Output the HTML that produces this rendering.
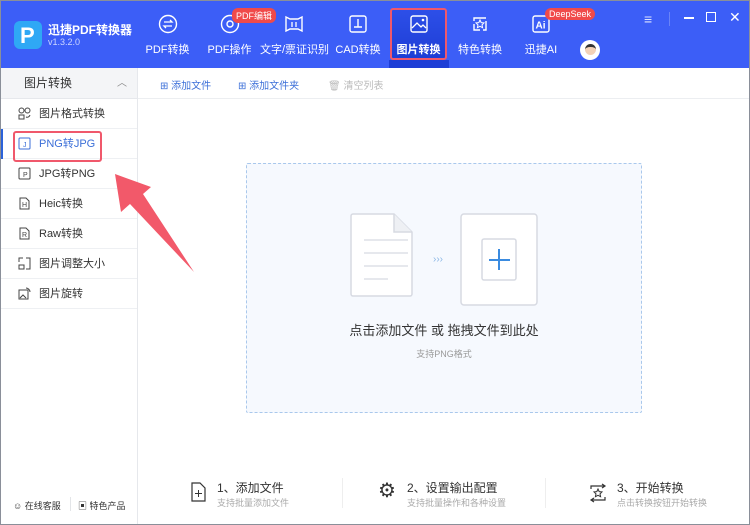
<!DOCTYPE html>
<html><head><meta charset="utf-8"><style>
*{margin:0;padding:0;box-sizing:border-box}
body{width:750px;height:525px;overflow:hidden;font-family:"Liberation Sans","Noto Sans CJK SC",sans-serif;background:#fff;position:relative;color:#333}
.abs{position:absolute}
.hdr{left:0;top:0;width:750px;height:68px;background:#3c5ef7}
.tab{position:absolute;top:0;height:68px;color:#fff;font-size:11px;text-align:center}
.tab span{position:absolute;top:41px;left:0;right:0;white-space:nowrap}
.tab svg{position:absolute;top:14px;left:50%;margin-left:-10px}
.side{left:0;top:68px;width:138px;height:457px;border-right:1px solid #e6e8ec;background:#fff}
.item{position:absolute;left:0;width:137px;height:30px;border-bottom:1px solid #eef0f3;font-size:11px;color:#333;padding-left:39px;line-height:30px}
.item svg{position:absolute;left:18px;top:8px}
.tb{font-size:10px;color:#3c6fd8;top:77px}
</style></head><body>
<div class="abs hdr"></div>
<div class="abs" style="left:14px;top:21px;width:28px;height:28px;border-radius:6px;background:#2fa8f5"></div>
<div class="abs" style="left:20px;top:25px;color:#fff;font-weight:bold;font-size:22px;line-height:22px">P</div>
<div class="abs" style="left:48px;top:21px;color:#fff;font-weight:bold;font-size:12px">迅捷PDF转换器</div>
<div class="abs" style="left:48px;top:37px;color:#cdd7ff;font-size:9px">v1.3.2.0</div>
<div class="tab" style="left:140px;width:55px"><svg width="20" height="20"><circle cx="10" cy="10" r="8.5" fill="none" stroke="#fff" stroke-width="1.4"/><path d="M6 8h8l-2-2M14 12H6l2 2" fill="none" stroke="#fff" stroke-width="1.3"/></svg><span>PDF转换</span></div>
<div class="tab" style="left:202px;width:55px"><svg width="20" height="20"><circle cx="10" cy="10" r="8.5" fill="none" stroke="#fff" stroke-width="1.4"/><circle cx="10" cy="10" r="3" fill="none" stroke="#fff" stroke-width="1.4"/></svg><span>PDF操作</span></div>
<div class="abs" style="left:232px;top:8px;background:#f04a4a;color:#fff;font-size:9px;padding:1px 4px;border-radius:6px">PDF编辑</div>
<div class="tab" style="left:260px;width:68px"><svg width="20" height="20"><path d="M2 3l4 2h8l4-2v14l-4-2H6l-4 2z" fill="none" stroke="#fff" stroke-width="1.4"/><path d="M8 8v5M12 8v5" stroke="#fff" stroke-width="1.3"/></svg><span>文字/票证识别</span></div>
<div class="tab" style="left:333px;width:50px"><svg width="20" height="20"><rect x="2" y="2" width="16" height="16" rx="2" fill="none" stroke="#fff" stroke-width="1.4"/><path d="M10 5v8M6 13h8" stroke="#fff" stroke-width="1.4"/></svg><span>CAD转换</span></div>
<div class="abs" style="left:390px;top:8px;width:57px;height:52px;border:2.5px solid #f0586b;border-radius:3px;background:linear-gradient(#2d4fe8,#1e3ed6)"></div>
<div class="abs" style="left:389px;top:60px;width:60px;height:8px;background:#1e3ed6"></div>
<div class="tab" style="left:390px;width:57px;font-weight:bold"><svg width="20" height="20"><rect x="2" y="2" width="16" height="16" rx="2" fill="none" stroke="#fff" stroke-width="1.4"/><path d="M3 14l5-5 4 4 2-2 3 3" fill="none" stroke="#fff" stroke-width="1.3"/><circle cx="14" cy="6" r="1.3" fill="#fff"/></svg><span>图片转换</span></div>
<div class="tab" style="left:455px;width:50px"><svg width="20" height="20"><path d="M4 4h12v12H4z" fill="none" stroke="#fff" stroke-width="1.4" stroke-dasharray="12 3"/><path d="M10 6l1.2 2.6 2.8.3-2 2 .6 2.8L10 12.3 7.4 13.7 8 10.9l-2-2 2.8-.3z" fill="none" stroke="#fff" stroke-width="1"/></svg><span>特色转换</span></div>
<div class="tab" style="left:516px;width:50px"><svg width="20" height="20"><rect x="2" y="2" width="16" height="16" rx="2" fill="none" stroke="#fff" stroke-width="1.4"/><text x="4.5" y="14.5" fill="#fff" font-size="10" font-weight="bold" font-family="Liberation Sans">Ai</text></svg><span>迅捷AI</span></div>
<div class="abs" style="left:545px;top:8px;background:#f04a4a;color:#fff;font-size:9px;padding:1px 4px;border-radius:6px">DeepSeek</div>
<div class="abs" style="left:580px;top:40px;width:20px;height:20px;border-radius:50%;background:#fff;overflow:hidden"><div style="margin:4px auto 0;width:11px;height:11px;border-radius:50%;background:#f3d2b8;border-top:3px solid #333"></div></div>
<div class="abs" style="left:644px;top:11px;color:#dbe2ff;font-size:14px">≡</div>
<div class="abs" style="left:669px;top:12px;width:1px;height:14px;background:#6a84f7"></div>
<div class="abs" style="left:684px;top:17px;width:10px;height:1.5px;background:#fff"></div>
<div class="abs" style="left:706px;top:12px;width:10px;height:10px;border:1.5px solid #fff"></div>
<div class="abs" style="left:729px;top:9px;color:#fff;font-size:14px">✕</div>
<div class="abs side">
<div style="height:31px;background:#f4f5f7;border-bottom:1px solid #e6e8ec;font-size:12px;line-height:31px;padding-left:24px">图片转换<span style="position:absolute;left:117px;color:#888;font-size:10px">︿</span></div>
<div class="item" style="top:31px"><svg width="13" height="13"><circle cx="3.5" cy="3.5" r="2.5" fill="none" stroke="#444"/><rect x="1" y="8" width="5" height="4" fill="none" stroke="#444"/><circle cx="9.5" cy="3.5" r="2.5" fill="none" stroke="#444"/><path d="M8 10a3 3 0 0 0 4-2" fill="none" stroke="#444"/></svg>图片格式转换</div>
<div class="item" style="top:61px;color:#3c6fd8"><svg width="13" height="13"><rect x="1" y="1" width="11" height="11" rx="1" fill="none" stroke="#3c6fd8"/><text x="5" y="10" font-size="7" fill="#3c6fd8">J</text></svg>PNG转JPG</div>
<div class="item" style="top:91px"><svg width="13" height="13"><rect x="1" y="1" width="11" height="11" rx="1" fill="none" stroke="#444"/><text x="5" y="10" font-size="7" fill="#444">P</text></svg>JPG转PNG</div>
<div class="item" style="top:121px"><svg width="13" height="13"><path d="M2 1h6l3 3v8H2z" fill="none" stroke="#444"/><text x="4" y="10" font-size="7" fill="#444">H</text></svg>Heic转换</div>
<div class="item" style="top:151px"><svg width="13" height="13"><path d="M2 1h6l3 3v8H2z" fill="none" stroke="#444"/><text x="4" y="10" font-size="7" fill="#444">R</text></svg>Raw转换</div>
<div class="item" style="top:181px"><svg width="13" height="13"><path d="M1 5V1h4M8 1h4v11H8M1 8h5v4H1z" fill="none" stroke="#444"/></svg>图片调整大小</div>
<div class="item" style="top:211px"><svg width="13" height="13"><rect x="1" y="3" width="9" height="9" fill="none" stroke="#444"/><path d="M2 11l3-3 3 3M8 1a4 4 0 0 1 4 4" fill="none" stroke="#444"/></svg>图片旋转</div>
<div class="abs" style="left:0;top:61px;width:3px;height:30px;background:#2b62d9"></div>
<div class="abs" style="left:13px;top:431px;font-size:9px;color:#333">☺ 在线客服</div>
<div class="abs" style="left:70px;top:429px;width:1px;height:14px;background:#e3e5e8"></div>
<div class="abs" style="left:78px;top:431px;font-size:9px;color:#333">▣ 特色产品</div>
</div>
<div class="abs" style="left:13px;top:131px;width:89px;height:31px;border:2.5px solid #f0586b;border-radius:3px"></div>
<div class="abs" style="left:138px;top:98px;width:612px;height:1px;background:#eceef1"></div>
<div class="abs tb" style="left:160px">⊞ 添加文件</div>
<div class="abs tb" style="left:238px">⊞ 添加文件夹</div>
<div class="abs tb" style="left:328px;color:#bbb">🗑 清空列表</div>
<div class="abs" style="left:246px;top:163px;width:396px;height:250px;border:1px dashed #a9c8ec;background:#f6f9fe;border-radius:2px"></div>
<svg class="abs" style="left:345px;top:210px" width="200" height="100">
<path d="M8 4h41l18 18v62a2 2 0 0 1-2 2H8a2 2 0 0 1-2-2V6a2 2 0 0 1 2-2z" fill="#fff" stroke="#d7dae2" stroke-width="1.5"/>
<path d="M49 4v18h18" fill="#eef0f4" stroke="#d7dae2" stroke-width="1.5"/>
<path d="M19 30h44M19 43h44M19 56h44M19 69h24" stroke="#d7dae2" stroke-width="1.3"/>
<text x="88" y="52" fill="#8bb7e6" font-size="10">›››</text>
<rect x="116" y="4" width="76" height="91" rx="3" fill="#fff" stroke="#d7dae2" stroke-width="1.5"/>
<rect x="137" y="29" width="34" height="41" rx="2" fill="#fff" stroke="#d7dae2" stroke-width="1.5"/>
<path d="M154 39v21M144 50h21" stroke="#3a8be0" stroke-width="2"/>
</svg>
<div class="abs" style="left:246px;top:320px;width:396px;text-align:center;font-size:13px;color:#333">点击添加文件 或 拖拽文件到此处</div>
<div class="abs" style="left:246px;top:347px;width:396px;text-align:center;font-size:9px;color:#999">支持PNG格式</div>
<div class="abs" style="left:342px;top:478px;width:1px;height:30px;background:#eee"></div>
<div class="abs" style="left:545px;top:478px;width:1px;height:30px;background:#eee"></div>
<svg class="abs" style="left:190px;top:482px" width="16" height="21"><path d="M2 1h8l5 5v13H2z" fill="none" stroke="#333" stroke-width="1.2"/><path d="M8.5 8v7M5 11.5h7" stroke="#333"/></svg>
<div class="abs" style="left:217px;top:479px;font-size:12px">1、添加文件</div>
<div class="abs" style="left:217px;top:496px;font-size:9px;color:#aaa">支持批量添加文件</div>
<div class="abs" style="left:378px;top:481px;font-size:20px;color:#333;line-height:20px">⚙</div>
<div class="abs" style="left:407px;top:479px;font-size:12px">2、设置输出配置</div>
<div class="abs" style="left:407px;top:496px;font-size:9px;color:#aaa">支持批量操作和各种设置</div>
<svg class="abs" style="left:588px;top:483px" width="20" height="20"><path d="M3 6V3h14M14 1l3 2-3 2M17 14v3H3M6 19l-3-2 3-2" fill="none" stroke="#333" stroke-width="1.2"/><path d="M10 6l1.2 2.6 2.8.3-2 2 .6 2.8L10 12.3 7.4 13.7 8 10.9l-2-2 2.8-.3z" fill="none" stroke="#333" stroke-width="1"/></svg>
<div class="abs" style="left:617px;top:479px;font-size:12px">3、开始转换</div>
<div class="abs" style="left:617px;top:496px;font-size:9px;color:#aaa">点击转换按钮开始转换</div>
<svg class="abs" style="left:0;top:0" width="750" height="525"><polygon points="115,174 151,187 143,194 194,272 130,204 121,212" fill="#f2596a"/></svg>
<div class="abs" style="left:0;top:0;width:750px;height:525px;border:1px solid #8a8f99;pointer-events:none"></div>
</body></html>
